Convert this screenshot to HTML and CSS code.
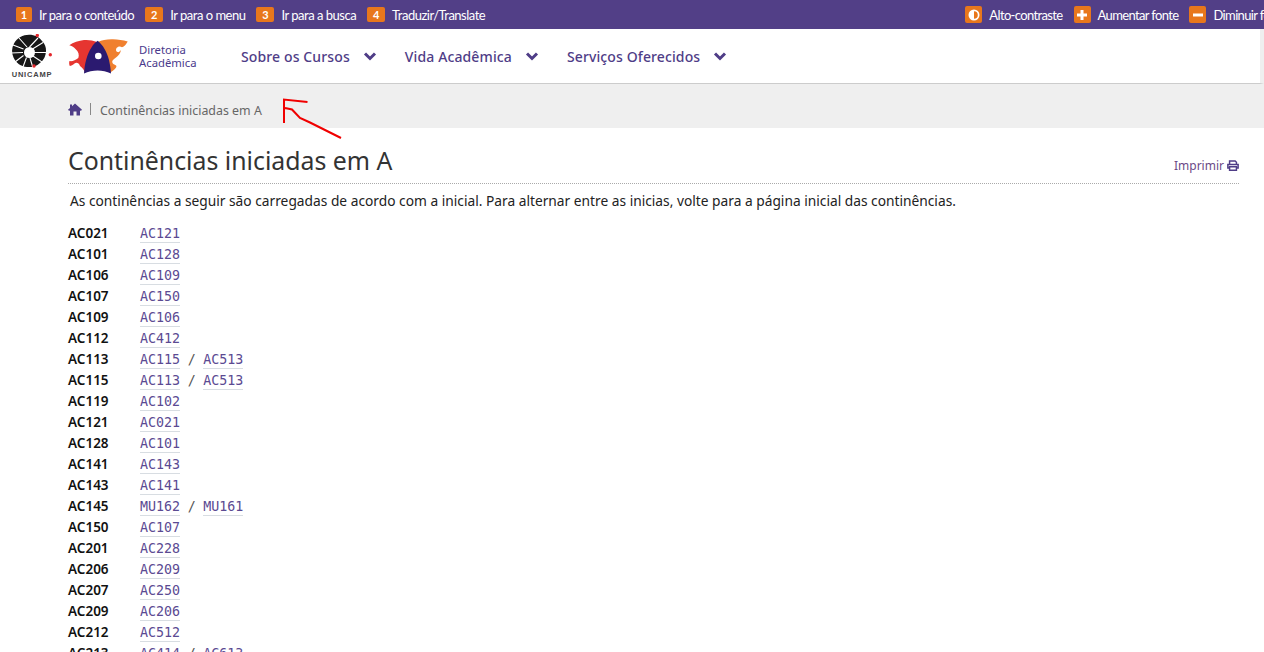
FILE: index.html
```html
<!DOCTYPE html>
<html lang="pt-BR">
<head>
<meta charset="utf-8">
<title>Continências iniciadas em A</title>
<link rel="stylesheet" href="styles.css">
</head>
<body>
<div class="topbar">
  <div class="skip">
    <a><span class="num">1</span>Ir para o conteúdo</a>
    <a><span class="num">2</span>Ir para o menu</a>
    <a><span class="num">3</span>Ir para a busca</a>
    <a><span class="num">4</span>Traduzir/Translate</a>
  </div>
  <div class="access">
    <a><span class="num ico"><svg viewBox="0 0 12 12" width="12" height="12"><circle cx="6" cy="6" r="5.500" fill="#fff"/><path d="M6 2.200a3.800 3.800 0 0 1 0 7.600z" fill="#e8771c"/></svg></span>Alto-contraste</a>
    <a><span class="num ico"><svg viewBox="0 0 12 12" width="12" height="12"><path d="M4.500 1h3v3.500H11v3H7.500V11h-3V7.500H1v-3h3.500z" fill="#fff"/></svg></span>Aumentar fonte</a>
    <a><span class="num ico"><svg viewBox="0 0 12 12" width="12" height="12"><path d="M1 4.500h10v3H1z" fill="#fff"/></svg></span>Diminuir fonte</a>
  </div>
</div>
<header class="header">
  <div class="unicamp">
    <svg viewBox="3 2 42 36" width="42" height="36">
      <path d="M21 2.800C27 2.800 31 5 34 9 37 12 38.200 15 38 19 37.800 24 36 28 32 31 28 34.500 24 35.500 19 35 13 34.500 8 31 5.500 25.500 3.500 21 3.500 16 6 11.500 9 6 15 2.800 21 2.800z" fill="#171717"/>
      <g stroke="#fff" stroke-width="1.100" fill="none">
        <path d="M21.500 15 30 6M24.500 17 35 10.500M26 20.500H38M25 24 34 30M22 26 25 36M18.500 25.500 15 35M15.500 23.500 7 30M15 20.500 3 21M15.500 17 5 13M19 15 11 6"/>
      </g>
      <circle cx="21.500" cy="20.500" r="5.500" fill="#fff"/>
      <circle cx="29.300" cy="3.500" r="1.700" fill="#e3262b"/>
      <circle cx="42.300" cy="22.700" r="1.700" fill="#e3262b"/>
      <circle cx="26" cy="34" r="1.700" fill="#e3262b"/>
    </svg>
    <span class="unicamp-name">UNICAMP</span>
  </div>
  <svg class="da-logo" viewBox="3 2 60 36" width="60" height="36">
    <path d="M3.300 9.300C7 6.500 13 4.500 18 4 23 3.600 27 4.500 31 6L19 36C18 34 16 31.500 14 30 13 27 10.500 26 8.500 27.500 7 29 5 30 3.800 30 3 28.500 3 26 3.500 25 6 25.500 9.500 24.500 12.300 22 13.500 19 12.500 15.500 9.500 13 7.500 11 5.500 9.800 3.300 9.300z" fill="#e63530"/>
    <path d="M32 6C36 4 41 3 47 3.200 52 3.400 57 4 61.700 5.500 60 8.500 58.500 10.500 56 11.200 54.500 10 52 10 50.500 12 49.500 14 50 15.500 51.500 16 52.500 16.500 54 15.500 55 14 54.500 17 52.500 20 50 21.500 47 23.500 45.500 25 46.500 27 47.500 28.500 49 28.500 50.500 30 50.500 32 48 34 45 36L44 36z" fill="#f0802f"/>
    <path d="M31.700 4.800C37 9 41 16 43 24 44 28.500 44.800 33 45 37.500 41 35.500 36 34.800 31.700 34.500 27 34.800 22 35.500 18 37.500 18.500 28 21 18 25.500 11.500 27 9 29 6.500 31.700 4.800z" fill="#2b1a70"/>
    <circle cx="32.300" cy="20" r="3.300" fill="#fff"/>
  </svg>
  <a class="da-name">Diretoria<br>Acadêmica</a>
  <nav class="nav">
    <a>Sobre os Cursos<svg class="chev" viewBox="0 0 14 10" width="14" height="10"><path d="M2 2.500 7 7.500 12 2.500" fill="none" stroke="#4f3d87" stroke-width="3"/></svg></a>
    <a>Vida Acadêmica<svg class="chev" viewBox="0 0 14 10" width="14" height="10"><path d="M2 2.500 7 7.500 12 2.500" fill="none" stroke="#4f3d87" stroke-width="3"/></svg></a>
    <a>Serviços Oferecidos<svg class="chev" viewBox="0 0 14 10" width="14" height="10"><path d="M2 2.500 7 7.500 12 2.500" fill="none" stroke="#4f3d87" stroke-width="3"/></svg></a>
  </nav>
</header>
<div class="crumbs">
  <svg viewBox="0 0 14 12" width="14" height="13"><path d="M7 0 14 6.300 12.800 7.500 12 6.800V12H8.500V8h-3v4H2V6.800L1.200 7.500 0 6.300 2 4.500V1h2v1.700z" fill="#4f3d87"/></svg>
  <span class="sep"></span>
  <span>Continências iniciadas em A</span>
</div>
<svg class="scribble" viewBox="0 0 70 45" width="70" height="45"><path d="M24.500 4 1 1.500V25M2 10 9 11.500 17 20 27 24.500 42 32 58 40" fill="none" stroke="#f00000" stroke-width="2"/></svg>
<main class="main">
  <div class="title-row">
    <h1>Continências iniciadas em A</h1>
    <a class="print">Imprimir <svg viewBox="0 0 14 12" width="12" height="11"><path d="M3 4V.8h6.500L11 2.200V4M3 9H1V4.800h12V9h-2M3 7.500h8v4H3z" fill="none" stroke="#4f3d87" stroke-width="1.700"/></svg></a>
  </div>
  <p class="intro">As continências a seguir são carregadas de acordo com a inicial. Para alternar entre as inicias, volte para a página inicial das continências.</p>
  <div class="list">
    <div class="row"><b>AC021</b><span><a>AC121</a></span></div>
    <div class="row"><b>AC101</b><span><a>AC128</a></span></div>
    <div class="row"><b>AC106</b><span><a>AC109</a></span></div>
    <div class="row"><b>AC107</b><span><a>AC150</a></span></div>
    <div class="row"><b>AC109</b><span><a>AC106</a></span></div>
    <div class="row"><b>AC112</b><span><a>AC412</a></span></div>
    <div class="row"><b>AC113</b><span><a>AC115</a> / <a>AC513</a></span></div>
    <div class="row"><b>AC115</b><span><a>AC113</a> / <a>AC513</a></span></div>
    <div class="row"><b>AC119</b><span><a>AC102</a></span></div>
    <div class="row"><b>AC121</b><span><a>AC021</a></span></div>
    <div class="row"><b>AC128</b><span><a>AC101</a></span></div>
    <div class="row"><b>AC141</b><span><a>AC143</a></span></div>
    <div class="row"><b>AC143</b><span><a>AC141</a></span></div>
    <div class="row"><b>AC145</b><span><a>MU162</a> / <a>MU161</a></span></div>
    <div class="row"><b>AC150</b><span><a>AC107</a></span></div>
    <div class="row"><b>AC201</b><span><a>AC228</a></span></div>
    <div class="row"><b>AC206</b><span><a>AC209</a></span></div>
    <div class="row"><b>AC207</b><span><a>AC250</a></span></div>
    <div class="row"><b>AC209</b><span><a>AC206</a></span></div>
    <div class="row"><b>AC212</b><span><a>AC512</a></span></div>
    <div class="row"><b>AC213</b><span><a>AC414</a> / <a>AC613</a></span></div>
  </div>
</main>
</body>
</html>
```
FILE: styles.css
```css
* { box-sizing: border-box; }
html, body { margin: 0; height: 652px; overflow: hidden; background: #fff; }
body { position: relative; font-family: "Noto Sans", sans-serif; color: #222; width: 1264px; }
.topbar { height: 29px; background: #523f87; color: #fff; display: flex; justify-content: space-between; padding-left: 16px; font-family: "Lato", sans-serif; font-size: 13px; letter-spacing: -.5px; white-space: nowrap; overflow: hidden; }
.skip, .access { display: flex; align-items: center; }
.skip { gap: 11px; }
.access { gap: 11px; margin-right: -23px; letter-spacing: -.64px; }
.skip a, .access a { display: flex; align-items: center; }
.num { width: 16px; height: 15px; border-radius: 2px; background: #e8771c; color: #fff; font-size: 11px; font-weight: 700; letter-spacing: 0; display: inline-flex; align-items: center; justify-content: center; margin-right: 7px; }
.skip a:nth-child(n+2) .num { width: 18px; }
.ico { width: 17px; height: 17px; margin-right: 7px; }
.header { height: 55px; border-bottom: 1px solid #ccc; border-right: 4px solid #efefef; display: flex; align-items: center; padding-left: 11px; }
.unicamp { width: 42px; display: flex; flex-direction: column; align-items: center; margin-top: 1px; }
.unicamp-name { font-family: "Liberation Sans", sans-serif; font-size: 7.500px; font-weight: 700; letter-spacing: .8px; color: #444; line-height: 8px; margin-top: 1px; white-space: nowrap; }
.da-logo { margin-left: 16px; }
.da-name { margin-left: 10px; font-size: 11.300px; line-height: 13px; color: #4a3a8c; width: 64px; }
.nav { display: flex; margin-left: 38px; gap: 28px; font-size: 14px; letter-spacing: .12px; color: #4f3d87; font-weight: 500; }
.nav a { display: flex; align-items: center; }
.chev { margin-left: 13px; }
.crumbs { height: 44px; background: #efefef; display: flex; align-items: center; padding: 8px 0 0 68px; font-size: 12.400px; color: #666; }
.crumbs svg { margin-top: -2px; }
.sep { width: 1px; height: 12px; background: #888; margin: -2px 9px 0 8px; }
.scribble { position: absolute; left: 283px; top: 98px; }
.main { padding: 0 25px 0 68px; }
.title-row { display: flex; justify-content: space-between; align-items: flex-end; border-bottom: 1px dotted #aaa; height: 56px; padding-bottom: 6px; }
h1 { margin: 0; font-size: 24.850px; font-weight: 400; color: #333; line-height: 34px; }
.print { font-size: 12px; color: #6b4a87; display: flex; align-items: center; gap: 3px; margin-bottom: 3px; }
.intro { margin: 7px 0 12px 2px; font-size: 13.750px; line-height: 20px; color: #222; }
.row { display: flex; height: 21px; line-height: 21px; font-size: 13.500px; }
.row b { width: 72px; font-weight: 600; color: #111; }
.row span { font-family: "DejaVu Sans Mono", monospace; font-size: 13.330px; color: #555; word-spacing: -.5px; }
.row a { color: #5b4a92; border-bottom: 1px solid #d8dde2; padding-bottom: 1px; }
```
